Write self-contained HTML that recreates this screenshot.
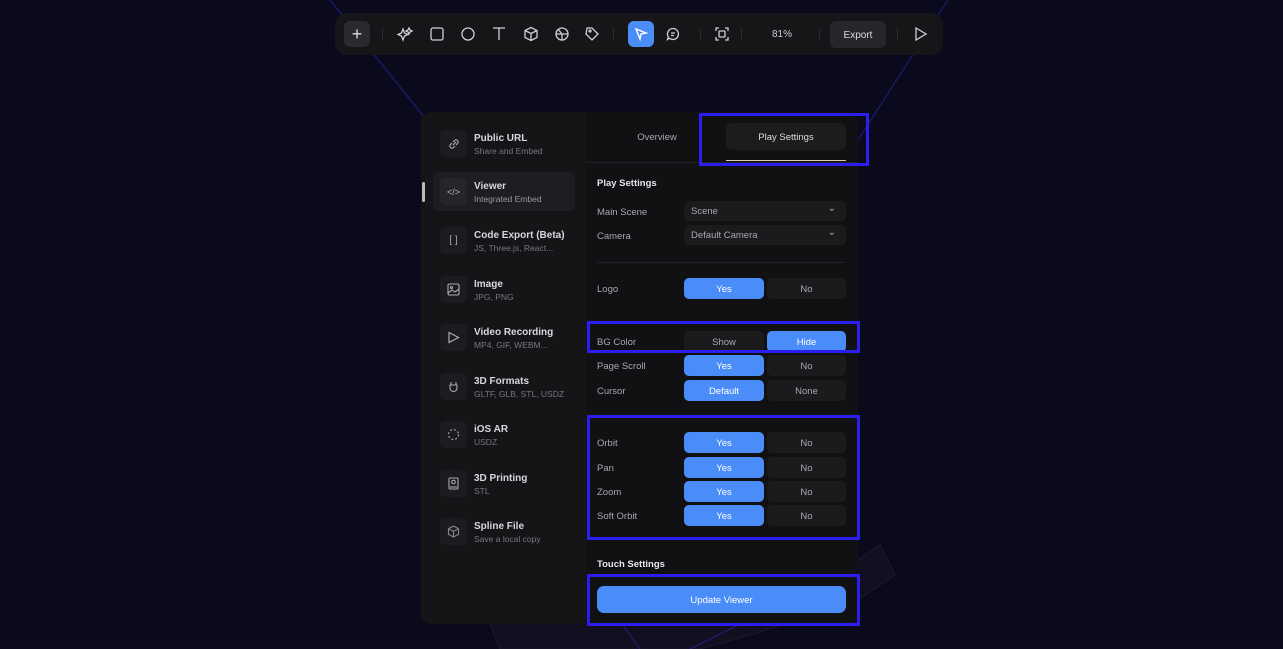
<!DOCTYPE html>
<html><head><style>
*{margin:0;padding:0;box-sizing:border-box}
body{width:1283px;height:649px;background:#0b0a1d;font-family:"Liberation Sans",sans-serif;position:relative;overflow:hidden;color:#ddd}
.a{position:absolute}
.tb{left:335px;top:13px;width:608px;height:42px;background:#161619;border-radius:12px}
.ic{position:absolute;top:21px;width:26px;height:26px;display:flex;align-items:center;justify-content:center}
.sep{position:absolute;top:28px;width:1px;height:12px;background:#2a2a2e}
.panel{left:421px;top:112px;width:437px;height:512px;background:#151518;border-radius:10px;overflow:hidden}
.right{left:165px;top:0;width:272px;height:512px;background:#111113}
.it{position:absolute;left:19px;width:142px;height:39px}
.it .bx{position:absolute;left:0;top:6px;width:27px;height:27px;border-radius:5px;background:#1c1c20;display:flex;align-items:center;justify-content:center}
.it .t{position:absolute;left:34px;top:9px;font-size:10px;font-weight:bold;color:#d8d8dc}
.it .s{position:absolute;left:34px;top:22px;font-size:8.5px;color:#77777d}
.lbl{position:absolute;left:597px;font-size:9.5px;color:#a8a8ae;margin-top:1px}
.btn{position:absolute;height:21px;border-radius:5px;font-size:9.5px;display:flex;align-items:center;justify-content:center;padding-top:1px}
.y{left:684px;width:80px;background:#4b8df8;color:#fff}
.n{left:767px;width:79px;background:#1b1b1e;color:#a8a8ae}
.g{left:684px;width:80px;background:#1b1b1e;color:#a8a8ae}
.box{position:absolute;border:3px solid #2d1ef0}
.dd{position:absolute;left:684px;width:162px;height:20px;background:#1b1b1e;border-radius:5px;font-size:9.5px;color:#a8a8ae;padding-left:7px;line-height:21px}
.dd:after{content:"⌄";position:absolute;right:10px;top:-3px;font-size:10px}
</style></head><body>
<svg class="a" style="left:0;top:0" width="1283" height="649"><polygon points="490,624 500,649 700,649 760,632 858,600 895,575 880,545 858,560" fill="#121020" stroke="#1c1830"/><g stroke="#231e80" stroke-width="1" fill="none"><line x1="330" y1="0" x2="425" y2="118"/><line x1="948" y1="0" x2="858" y2="140"/><line x1="622" y1="624" x2="640" y2="649"/><line x1="690" y1="649" x2="740" y2="624"/></g></svg>
<div class="a tb"></div>
<div class="ic" style="left:344px;background:#2a2a2e;border-radius:6px;color:#ddd;font-size:18px">+</div>
<div class="sep" style="left:382px"></div>
<svg class="a" style="left:397px;top:26px" width="220" height="17" fill="none" stroke="#cfcfd4" stroke-width="1.3">
<path d="M6 3 L7.5 7 L11 8.5 L7.5 10 L6 14 L4.5 10 L1 8.5 L4.5 7Z M12 2 l1 2 l2 1 l-2 1 l-1 2 l-1-2 l-2-1 l2-1z"/>
<rect x="34" y="2" width="12" height="12" rx="2"/>
<circle cx="71" cy="8" r="6"/>
<path d="M96 2 h12 M102 2 v12"/>
<path d="M134 1.5 l6 3 v7 l-6 3 l-6-3 v-7z M128 4.5 l6 3 l6-3 M134 7.5 v7"/>
<circle cx="165" cy="8" r="6"/><path d="M159 8 h12 M165 8 v6 M165 8 l-4-5"/>
<path d="M190 2 h5 l6 6 l-6 6 l-6-6z"/><circle cx="193" cy="5" r="1"/>
</svg>
<div class="sep" style="left:613px"></div>
<div class="ic" style="left:628px;background:#4b8df8;border-radius:6px"><svg width="14" height="14" fill="none" stroke="#fff" stroke-width="1.4"><path d="M2 2 L12 6 L7 7 L6 12Z"/></svg></div>
<div class="ic" style="left:660px"><svg width="14" height="14" fill="none" stroke="#cfcfd4" stroke-width="1.3"><path d="M7 1.5a5.5 5.5 0 1 1-3.5 9.8L1.5 12.5l.8-2.6A5.5 5.5 0 0 1 7 1.5z M5 6h4 M5 8.5h3"/></svg></div>
<div class="sep" style="left:700px"></div>
<div class="ic" style="left:709px"><svg width="14" height="14" fill="none" stroke="#cfcfd4" stroke-width="1.3"><path d="M1 4V1h3 M10 1h3v3 M13 10v3h-3 M4 13H1v-3"/><rect x="4" y="4" width="6" height="6" rx="1"/></svg></div>
<div class="sep" style="left:741px"></div>
<div class="a" style="left:762px;top:29px;font-size:10px;color:#cfcfd4;width:40px;text-align:center">81%</div>
<div class="sep" style="left:819px"></div>
<div class="a" style="left:830px;top:21px;width:56px;height:27px;background:#27272b;border-radius:6px;font-size:10px;color:#ddd;display:flex;align-items:center;justify-content:center;padding-top:1px">Export</div>
<div class="sep" style="left:897px"></div>
<svg class="a" style="left:913px;top:26px" width="16" height="16" fill="none" stroke="#cfcfd4" stroke-width="1.3"><path d="M3 2 L13 8 L3 14Z"/></svg>

<div class="a panel"><div class="a right"></div>
<div class="a" style="left:165px;top:50px;width:272px;height:1px;background:#222226"></div>
</div>
<div class="a" style="left:422px;top:182px;width:3px;height:20px;background:#bbb;border-radius:2px"></div>
<div class="a" style="left:433px;top:172px;width:142px;height:39px;background:#1e1e22;border-radius:6px"></div>
<div style="position:absolute;left:421px;top:0">
<div class="it" style="top:124px"><div class="bx"><svg width="12" height="12" fill="none" stroke="#aaa" stroke-width="1.2"><path d="M5 7 l3-3 M4 5 l-1.5 1.5 a2 2 0 0 0 3 3 L7 8 M8 7 l1.5-1.5 a2 2 0 0 0-3-3 L5 4"/></svg></div><div class="t">Public URL</div><div class="s">Share and Embed</div></div>
<div class="it" style="top:172px"><div class="bx" style="background:#26262a;color:#bbb;font-size:9px">&lt;/&gt;</div><div class="t">Viewer</div><div class="s" style="color:#999">Integrated Embed</div></div>
<div class="it" style="top:221px"><div class="bx" style="color:#aaa;font-size:10px">[ ]</div><div class="t">Code Export (Beta)</div><div class="s">JS, Three.js, React...</div></div>
<div class="it" style="top:270px"><div class="bx"><svg width="13" height="13" fill="none" stroke="#aaa" stroke-width="1.1"><rect x="1" y="1" width="11" height="11" rx="1.5"/><circle cx="4.5" cy="4.5" r="1"/><path d="M1 10 l4-3 l3 2 l4-3"/></svg></div><div class="t">Image</div><div class="s">JPG, PNG</div></div>
<div class="it" style="top:318px"><div class="bx"><svg width="13" height="13" fill="none" stroke="#aaa" stroke-width="1.2"><path d="M2 1.5 L11.5 6.5 L2 11.5Z"/></svg></div><div class="t">Video Recording</div><div class="s">MP4, GIF, WEBM...</div></div>
<div class="it" style="top:367px"><div class="bx"><svg width="13" height="13" fill="none" stroke="#aaa" stroke-width="1.1"><path d="M4 2 v3 M9 2 v3 M3 5 h7 v3 a3.5 3.5 0 0 1-7 0z"/></svg></div><div class="t">3D Formats</div><div class="s">GLTF, GLB, STL, USDZ</div></div>
<div class="it" style="top:415px"><div class="bx"><svg width="13" height="13" fill="none" stroke="#aaa" stroke-width="1.1" stroke-dasharray="2 2"><circle cx="6.5" cy="6.5" r="5"/></svg></div><div class="t">iOS AR</div><div class="s">USDZ</div></div>
<div class="it" style="top:464px"><div class="bx"><svg width="13" height="13" fill="none" stroke="#aaa" stroke-width="1.1"><rect x="2" y="1" width="9" height="11" rx="1"/><circle cx="6.5" cy="5" r="1.8"/><path d="M3 10h7"/></svg></div><div class="t">3D Printing</div><div class="s">STL</div></div>
<div class="it" style="top:512px"><div class="bx"><svg width="13" height="13" fill="none" stroke="#888" stroke-width="1.1"><path d="M6.5 1 l5 2.7 v5.6 l-5 2.7 l-5-2.7 v-5.6z M1.5 3.7 l5 2.7 l5-2.7 M6.5 6.4 v5.6"/></svg></div><div class="t">Spline File</div><div class="s">Save a local copy</div></div>
</div>

<div class="a" style="left:616px;top:132px;width:82px;text-align:center;font-size:9.5px;color:#a8a8ae">Overview</div>
<div class="a" style="left:726px;top:123px;width:120px;height:27px;background:#1c1c1f;border-radius:6px;font-size:9.5px;color:#ddd;display:flex;align-items:center;justify-content:center;padding-top:1px">Play Settings</div>
<div class="a" style="left:726px;top:160px;width:120px;height:1px;background:#d8d0b0"></div>
<div class="a" style="left:597px;top:178px;font-size:9.5px;font-weight:bold;color:#e6e6ea">Play Settings</div>
<div class="lbl" style="top:206px">Main Scene</div><div class="dd" style="top:201px">Scene</div>
<div class="lbl" style="top:230px">Camera</div><div class="dd" style="top:225px">Default Camera</div>
<div class="a" style="left:597px;top:262px;width:249px;height:1px;background:#222226"></div>
<div class="lbl" style="top:283px">Logo</div><div class="btn y" style="top:278px">Yes</div><div class="btn n" style="top:278px">No</div>
<div class="lbl" style="top:336px">BG Color</div><div class="btn g" style="top:331px">Show</div><div class="btn n" style="top:331px;background:#4b8df8;color:#fff">Hide</div>
<div class="lbl" style="top:360px">Page Scroll</div><div class="btn y" style="top:355px">Yes</div><div class="btn n" style="top:355px">No</div>
<div class="lbl" style="top:385px">Cursor</div><div class="btn y" style="top:380px">Default</div><div class="btn n" style="top:380px">None</div>
<div class="lbl" style="top:437px">Orbit</div><div class="btn y" style="top:432px">Yes</div><div class="btn n" style="top:432px">No</div>
<div class="lbl" style="top:462px">Pan</div><div class="btn y" style="top:457px">Yes</div><div class="btn n" style="top:457px">No</div>
<div class="lbl" style="top:486px">Zoom</div><div class="btn y" style="top:481px">Yes</div><div class="btn n" style="top:481px">No</div>
<div class="lbl" style="top:510px">Soft Orbit</div><div class="btn y" style="top:505px">Yes</div><div class="btn n" style="top:505px">No</div>
<div class="a" style="left:597px;top:559px;font-size:9.5px;font-weight:bold;color:#e6e6ea">Touch Settings</div>
<div class="btn" style="left:597px;top:586px;width:249px;height:27px;background:#4b8df8;color:#fff;border-radius:7px">Update Viewer</div>

<div class="box" style="left:699px;top:113px;width:170px;height:53px"></div>
<div class="box" style="left:587px;top:321px;width:273px;height:32px"></div>
<div class="box" style="left:587px;top:415px;width:273px;height:125px"></div>
<div class="box" style="left:587px;top:574px;width:273px;height:52px"></div>
</body></html>
